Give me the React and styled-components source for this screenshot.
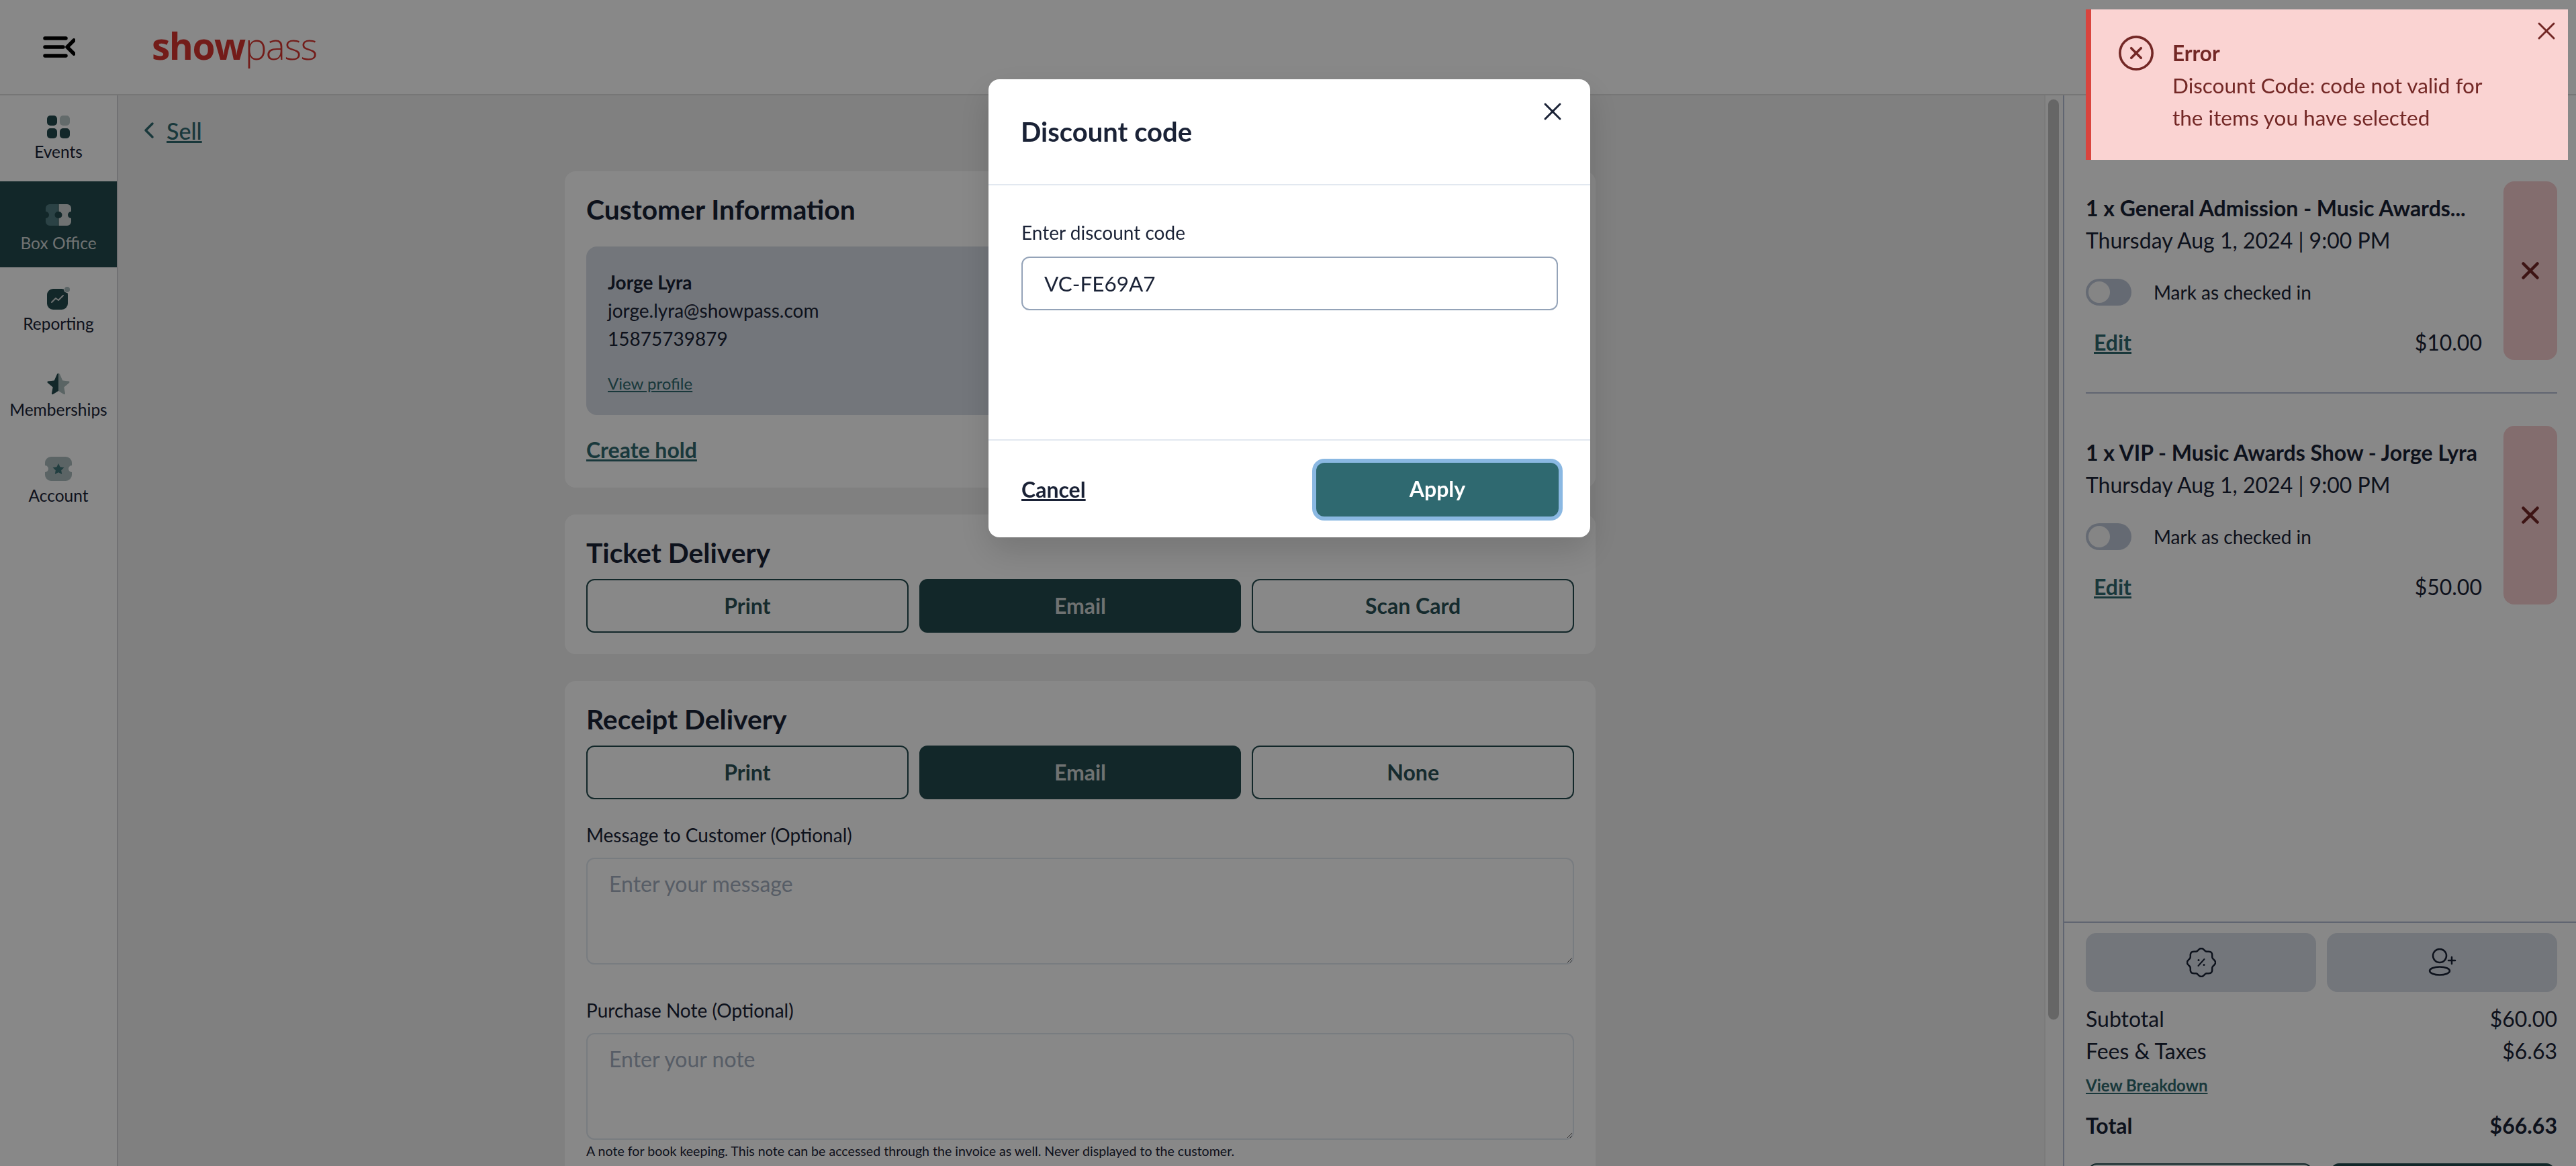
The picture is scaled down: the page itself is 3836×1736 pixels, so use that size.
import React from "react"
import styled, { createGlobalStyle } from "styled-components"
import { ChevronLeft, X, CircleX } from "lucide-react"

const GlobalStyle = createGlobalStyle`
  * {
    box-sizing: border-box;
  }

  html,
  body {
    margin: 0;
    height: 100%;
    overflow: hidden;
    font-family: "Lato", "Liberation Sans", sans-serif;
    color: #1a2236;
    background: #ffffff;
  }

  button,
  input,
  textarea {
    font-family: inherit;
  }
`

const Page = styled.div`
  display: flex;
  flex-direction: column;
  height: 1736px;
  overflow: hidden;
`

const Topbar = styled.header`
  display: flex;
  align-items: center;
  flex: 0 0 142px;
  padding-left: 64px;
  background: #ffffff;
  border-bottom: 2px solid #dedede;
`

const MenuIcon = styled.svg`
  display: block;
  margin-right: 114px;
`

const Logo = styled.div`
  font-family: "Open Sans", sans-serif;
  font-size: 55px;
  line-height: 1;
  letter-spacing: -1.5px;
  color: #d83530;
  margin-top: -6px;

  b {
    font-weight: 700;
  }

  span {
    font-weight: 300;
  }
`

const Body = styled.div`
  display: flex;
  flex: 1;
  min-height: 0;
`

const Sidebar = styled.nav`
  flex: 0 0 176px;
  background: #ffffff;
  border-right: 2px solid #d4d4d8;
`

const NavItem = styled.div`
  display: flex;
  flex-direction: column;
  align-items: center;
  height: 128px;
  padding-top: ${(p) => p.$pad}px;
  gap: ${(p) => p.$gap}px;
  font-size: 24.5px;
  line-height: 32px;
  color: ${(p) => (p.$active ? "#d0d6d6" : "#1a2236")};
  background: ${(p) => (p.$active ? "#224a4d" : "transparent")};
`

const Main = styled.main`
  flex: 1;
  min-width: 0;
  overflow: hidden;
  background: #f0f0f0;
`

const ScrollTrack = styled.div`
  flex: 0 0 28px;
  padding: 6px 6px 0 4px;
  background: #fafafa;
  border-left: 2px solid #e6e6e6;
`

const ScrollThumb = styled.div`
  height: 1370px;
  border-radius: 8px;
  background: #c0c0c0;
`

const Column = styled.div`
  width: 1535px;
  margin-left: 665px;
`

const BackRow = styled.div`
  display: flex;
  align-items: center;
  margin-left: -639px;
  height: 113px;
  padding-bottom: 9px;
  gap: 6px;
  font-size: 34px;
  font-weight: 500;
  color: #2f6970;

  span {
    text-decoration: underline;
  }
`

const Card = styled.section`
  background: #ffffff;
  border-radius: 16px;
  padding: 32px;
  margin-bottom: 40px;
`

const CardTitle = styled.h2`
  margin: 0;
  font-size: 40.8px;
  font-weight: 700;
  line-height: 50px;
  color: #1a2236;
`

const InfoBox = styled.div`
  margin-top: 30px;
  height: 251px;
  padding: 32px;
  border-radius: 16px;
  background: #d7dde6;
  font-size: 28px;
  line-height: 42px;

  strong {
    display: block;
    font-weight: 700;
  }
`

const SmallLink = styled.a`
  display: block;
  margin-top: 30px;
  font-size: 24px;
  line-height: 32px;
  color: #2f6970;
  text-decoration: underline;
`

const HoldLink = styled.a`
  display: block;
  margin-top: 32px;
  margin-bottom: 4px;
  font-size: 32px;
  line-height: 40px;
  font-weight: 700;
  color: #2f6970;
  text-decoration: underline;
`

const ChoiceRow = styled.div`
  display: grid;
  grid-template-columns: repeat(3, 1fr);
  gap: 16px;
  margin-top: 14px;
`

const Choice = styled.button`
  height: 80px;
  padding: 0 0 2px;
  font-size: 32px;
  font-weight: 700;
  border: 2px solid #224a4d;
  border-radius: 12px;
  color: ${(p) => (p.$active ? "#d0d6d6" : "#2a5256")};
  background: ${(p) => (p.$active ? "#224a4d" : "#ffffff")};
`

const FieldLabel = styled.label`
  display: block;
  margin-top: ${(p) => p.$top}px;
  font-size: 28px;
  line-height: 40px;
`

const Area = styled.textarea`
  display: block;
  width: 100%;
  height: 159px;
  margin-top: 14px;
  padding: 17px 32px;
  font-size: 32px;
  line-height: 40px;
  color: #1a2236;
  background: #ffffff;
  border: 2px solid #e2e8f0;
  border-radius: 12px;
  outline: none;

  &::placeholder {
    color: #a3aec0;
  }
`

const Hint = styled.div`
  margin-top: 4px;
  font-size: 19.6px;
  line-height: 26px;
`

const Cart = styled.aside`
  display: flex;
  flex-direction: column;
  flex: 0 0 764px;
  min-width: 0;
  background: #ffffff;
  border-left: 2px solid #b4bdd4;
`

const CartList = styled.div`
  flex: 1;
  min-height: 0;
  padding: 128px 28px 0 32px;
`

const CartItem = styled.div`
  display: grid;
  grid-template-columns: minmax(0, 1fr) 80px;
  column-gap: 32px;
  height: 266px;
`

const ItemText = styled.div`
  padding-top: 16px;
  font-size: 32px;
  line-height: 48px;
`

const ItemTitle = styled.div`
  font-weight: 700;
  white-space: nowrap;
`

const CheckRow = styled.div`
  display: flex;
  align-items: center;
  gap: 33px;
  margin-top: 33px;
  font-size: 28px;
  line-height: 40px;
`

const Toggle = styled.span`
  display: flex;
  align-items: center;
  width: 68px;
  height: 40px;
  padding: 4px;
  border-radius: 20px;
  background: #bec7d8;

  &::before {
    content: "";
    width: 32px;
    height: 32px;
    border-radius: 50%;
    background: #fafafa;
  }
`

const PriceRow = styled.div`
  display: flex;
  justify-content: space-between;
  margin-top: 31px;
  padding-left: 12px;
  font-size: 32px;
  line-height: 48px;
`

const EditLink = styled.a`
  font-weight: 700;
  color: #2f6970;
  text-decoration: underline;
`

const RemoveButton = styled.button`
  display: flex;
  align-items: center;
  justify-content: center;
  padding: 0;
  color: #732626;
  background: #f6ccce;
  border: none;
  border-radius: 16px;
`

const Rule = styled.hr`
  margin: 48px 0;
  border: none;
  border-top: 2px solid #b4bdd4;
`

const CartFooter = styled.div`
  flex: 0 0 364px;
  overflow: hidden;
  padding: 15px 28px 0 32px;
  border-top: 2px solid #b4bdd4;
`

const ActionRow = styled.div`
  display: grid;
  grid-template-columns: 1fr 1fr;
  gap: 16px;
`

const ActionButton = styled.button`
  display: flex;
  align-items: center;
  justify-content: center;
  height: 88px;
  padding: 0;
  color: #1a2236;
  background: #d7dde6;
  border: none;
  border-radius: 16px;
`

const SumRow = styled.div`
  display: flex;
  justify-content: space-between;
  font-size: 32px;
  line-height: 48px;
  font-weight: ${(p) => (p.$bold ? 700 : 400)};
  margin-top: ${(p) => p.$top || 0}px;
`

const BreakdownLink = styled.a`
  display: block;
  margin-top: 9px;
  font-size: 24px;
  line-height: 36px;
  font-weight: 700;
  color: #2f6970;
  text-decoration: underline;
`

const PayRow = styled.div`
  display: grid;
  grid-template-columns: 1fr 1fr;
  gap: 28px;
  margin-top: 32px;
  padding: 0 4px;
`

const PayButton = styled.div`
  height: 80px;
  border: 2px solid #224a4d;
  border-radius: 12px;
  background: ${(p) => (p.$solid ? "#224a4d" : "#ffffff")};
`

const Overlay = styled.div`
  position: fixed;
  inset: 0;
  background: rgba(0, 0, 0, 0.467);
`

const Modal = styled.div`
  position: fixed;
  top: 118px;
  left: 1472px;
  display: flex;
  flex-direction: column;
  width: 896px;
  height: 682px;
  background: #ffffff;
  border-radius: 16px;
  box-shadow: 0 20px 50px rgba(0, 0, 0, 0.15);
`

const ModalHead = styled.div`
  display: flex;
  align-items: center;
  flex: 0 0 158px;
  padding: 0 48px;
  border-bottom: 2px solid #e2e8f0;
`

const ModalTitle = styled.h3`
  margin: 0;
  font-size: 40px;
  font-weight: 700;
  line-height: 50px;
`

const CloseButton = styled.button`
  position: absolute;
  top: ${(p) => p.$top}px;
  right: ${(p) => p.$right}px;
  display: flex;
  padding: 0;
  color: inherit;
  background: none;
  border: none;
`

const ModalBody = styled.div`
  flex: 1;
  padding: 50px 48px 0 49px;
`

const ModalLabel = styled.label`
  display: block;
  font-size: 28px;
  line-height: 40px;
`

const CodeInput = styled.input`
  display: block;
  width: 100%;
  height: 80px;
  margin-top: 16px;
  padding: 0 32px;
  font-size: 31.5px;
  color: #1a2236;
  background: #ffffff;
  border: 2px solid #94a3b8;
  border-radius: 12px;
  outline: none;
`

const ModalFoot = styled.div`
  display: flex;
  align-items: center;
  justify-content: space-between;
  flex: 0 0 146px;
  padding: 0 47px 0 49px;
  border-top: 2px solid #e2e8f0;
`

const CancelLink = styled.a`
  font-size: 32px;
  font-weight: 700;
  text-decoration: underline;
`

const ApplyButton = styled.button`
  width: 361px;
  height: 80px;
  margin-top: 1px;
  padding: 0 0 2px;
  font-size: 32px;
  font-weight: 700;
  color: #ffffff;
  background: #2f6970;
  border: none;
  border-radius: 12px;
  box-shadow: 0 0 0 6px #8ab8e2;
`

const Toast = styled.div`
  position: fixed;
  top: 14px;
  left: 3106px;
  display: flex;
  width: 718px;
  height: 224px;
  padding: 36px 40px 0 38px;
  gap: 25px;
  color: #732826;
  background: #fad3d2;
  border-left: 8px solid #d9443e;
`

const ToastIcon = styled.div`
  flex: 0 0 58px;
`

const ToastText = styled.div`
  margin-top: 5px;
  font-size: 31.5px;
  line-height: 48px;

  strong {
    display: block;
    font-weight: 700;
  }
`

const EventsIcon = () => (
  <svg width="34" height="34" viewBox="0 0 34 34">
    <rect width="15" height="15" rx="5" fill="#22494d" />
    <rect x="19" width="15" height="15" rx="5" fill="#bac8c9" />
    <rect y="19" width="15" height="15" rx="5" fill="#22494d" />
    <rect x="19" y="19" width="15" height="15" rx="5" fill="#22494d" />
  </svg>
)

const halfTicket =
  "M7 0H19.5V11a5 5 0 0 0 0 10V32H7a6 6 0 0 1-6-6V21a5 5 0 0 0 0-10V6a6 6 0 0 1 6-6z"

const BoxOfficeIcon = () => (
  <svg width="40" height="32" viewBox="0 0 40 32">
    <path d={halfTicket} fill="#81b0b5" opacity="0.5" />
    <path d={halfTicket} fill="#d0d6d6" transform="matrix(-1 0 0 1 40 0)" />
  </svg>
)

const ReportingIcon = () => (
  <svg width="34" height="34" viewBox="0 0 34 34">
    <rect x="0" y="3" width="31" height="31" rx="9" fill="#22494d" />
    <circle cx="30" cy="4" r="5" fill="#ffffff" />
    <circle cx="30" cy="4" r="4" fill="#a9bcbe" />
    <path d="M7 23l6-6 4 3 7-7" fill="none" stroke="#d0d6d6" strokeWidth="2" strokeLinecap="round" strokeLinejoin="round" />
  </svg>
)

const MembershipIcon = () => (
  <svg width="34" height="33" viewBox="0 0 34 33">
    <path d="M17 0v26l-8 5c-1 .6-2.200-.2-2-1.400l1.700-9L1 14c-1-.9-.5-2.300.8-2.500l9-1L15 1c.5-1 1.300-1 2-1z" fill="#22494d" />
    <path d="M17 0c.7 0 1.500.2 2 1l4.200 9.500 9 1c1.300.2 1.800 1.600.8 2.500l-7.700 6.600 1.700 9c.2 1.200-1 2-2 1.400l-8-5z" fill="#aabbbc" />
  </svg>
)

const AccountIcon = () => (
  <svg width="40" height="36" viewBox="0 0 40 36">
    <path d="M9 0H31a9 9 0 0 1 9 9v4a5 5 0 0 0 0 10v4a9 9 0 0 1-9 9H9a9 9 0 0 1-9-9v-4a5 5 0 0 0 0-10V9a9 9 0 0 1 9-9z" fill="#abbcbd" />
    <path d="M20 10l2.600 5.300 5.900.8-4.300 4.100 1 5.800-5.200-2.700-5.200 2.700 1-5.800-4.300-4.100 5.900-.8z" fill="#3f7479" />
  </svg>
)

// scalloped outline, 8 lobes round the centre
const badgeOutline = Array.from({ length: 96 }, (_, i) => {
  const angle = (i / 96) * Math.PI * 2
  const r = 19.5 + 1.6 * Math.cos(angle * 8)
  const x = 22 + r * Math.sin(angle)
  const y = 22 - r * Math.cos(angle)
  return `${x.toFixed(2)} ${y.toFixed(2)}`
}).join("L")

const DiscountIcon = () => (
  <svg width="44" height="44" viewBox="0 0 44 44" fill="none" stroke="currentColor" strokeWidth="2.500" strokeLinecap="round" strokeLinejoin="round">
    <path d={`M${badgeOutline}Z`} />
    <path d="M17.500 27l9-10" strokeWidth="2" />
    <path d="M18 18.500h.01M26 25.500h.01" strokeWidth="3" />
  </svg>
)

const UserAddIcon = () => (
  <svg width="42" height="42" viewBox="0 0 42 42" fill="none" stroke="currentColor" strokeWidth="2.500" strokeLinecap="round">
    <circle cx="17" cy="11" r="10" />
    <ellipse cx="17" cy="33.500" rx="15" ry="6" />
    <path d="M35 13v10M30 18h10" />
  </svg>
)

const CartLine = ({ title, price }) => (
  <CartItem>
    <ItemText>
      <ItemTitle>{title}</ItemTitle>
      <div>Thursday Aug 1, 2024 | 9:00 PM</div>
      <CheckRow>
        <Toggle />
        Mark as checked in
      </CheckRow>
      <PriceRow>
        <EditLink>Edit</EditLink>
        <span>{price}</span>
      </PriceRow>
    </ItemText>
    <RemoveButton>
      <X size={42} strokeWidth={2.6} />
    </RemoveButton>
  </CartItem>
)

const App = () => {
  return (
    <Page>
      <GlobalStyle />
      <Topbar>
        <MenuIcon width="48" height="32" viewBox="0 0 48 32" fill="none" stroke="#000" strokeWidth="5.500" strokeLinecap="round" strokeLinejoin="round">
          <path d="M3 3h31M3 16h27M3 29h31M46 6L36 16l10 10" />
        </MenuIcon>
        <Logo>
          <b>show</b>
          <span>pass</span>
        </Logo>
      </Topbar>
      <Body>
        <Sidebar>
          <NavItem $pad={30} $gap={4}>
            <EventsIcon />
            Events
          </NavItem>
          <NavItem $active $pad={34} $gap={10}>
            <BoxOfficeIcon />
            Box Office
          </NavItem>
          <NavItem $pad={29} $gap={5}>
            <ReportingIcon />
            Reporting
          </NavItem>
          <NavItem $pad={30} $gap={5}>
            <MembershipIcon />
            Memberships
          </NavItem>
          <NavItem $pad={26} $gap={6}>
            <AccountIcon />
            Account
          </NavItem>
        </Sidebar>
        <Main>
          <Column>
            <BackRow>
              <ChevronLeft size={40} strokeWidth={2.1} />
              <span>Sell</span>
            </BackRow>
            <Card>
              <CardTitle>Customer Information</CardTitle>
              <InfoBox>
                <strong>Jorge Lyra</strong>
                jorge.lyra@showpass.com
                <br />
                15875739879
                <SmallLink>View profile</SmallLink>
              </InfoBox>
              <HoldLink>Create hold</HoldLink>
            </Card>
            <Card>
              <CardTitle>Ticket Delivery</CardTitle>
              <ChoiceRow>
                <Choice>Print</Choice>
                <Choice $active>Email</Choice>
                <Choice>Scan Card</Choice>
              </ChoiceRow>
            </Card>
            <Card>
              <CardTitle>Receipt Delivery</CardTitle>
              <ChoiceRow>
                <Choice>Print</Choice>
                <Choice $active>Email</Choice>
                <Choice>None</Choice>
              </ChoiceRow>
              <FieldLabel $top={33}>Message to Customer (Optional)</FieldLabel>
              <Area placeholder="Enter your message" />
              <FieldLabel $top={48}>Purchase Note (Optional)</FieldLabel>
              <Area placeholder="Enter your note" />
              <Hint>
                A note for book keeping. This note can be accessed through the invoice as well. Never displayed to the customer.
              </Hint>
            </Card>
          </Column>
        </Main>
        <ScrollTrack>
          <ScrollThumb />
        </ScrollTrack>
        <Cart>
          <CartList>
            <CartLine title="1 x General Admission - Music Awards..." price="$10.00" />
            <Rule />
            <CartLine title="1 x VIP - Music Awards Show - Jorge Lyra" price="$50.00" />
          </CartList>
          <CartFooter>
            <ActionRow>
              <ActionButton>
                <DiscountIcon />
              </ActionButton>
              <ActionButton>
                <UserAddIcon />
              </ActionButton>
            </ActionRow>
            <SumRow $top={16}>
              <span>Subtotal</span>
              <span>$60.00</span>
            </SumRow>
            <SumRow>
              <span>Fees &amp; Taxes</span>
              <span>$6.63</span>
            </SumRow>
            <BreakdownLink>View Breakdown</BreakdownLink>
            <SumRow $bold $top={18}>
              <span>Total</span>
              <span>$66.63</span>
            </SumRow>
            <PayRow>
              <PayButton />
              <PayButton $solid />
            </PayRow>
          </CartFooter>
        </Cart>
      </Body>
      <Overlay />
      <Modal>
        <CloseButton $top={26} $right={34}>
          <X size={44} strokeWidth={1.6} />
        </CloseButton>
        <ModalHead>
          <ModalTitle>Discount code</ModalTitle>
        </ModalHead>
        <ModalBody>
          <ModalLabel>Enter discount code</ModalLabel>
          <CodeInput defaultValue="VC-FE69A7" />
        </ModalBody>
        <ModalFoot>
          <CancelLink>Cancel</CancelLink>
          <ApplyButton>Apply</ApplyButton>
        </ModalFoot>
      </Modal>
      <Toast>
        <ToastIcon>
          <CircleX size={58} strokeWidth={1.5} />
        </ToastIcon>
        <ToastText>
          <strong>Error</strong>
          Discount Code: code not valid for
          <br />
          the items you have selected
        </ToastText>
        <CloseButton $top={10} $right={10}>
          <X size={44} strokeWidth={1.6} />
        </CloseButton>
      </Toast>
    </Page>
  )
}

export default App
